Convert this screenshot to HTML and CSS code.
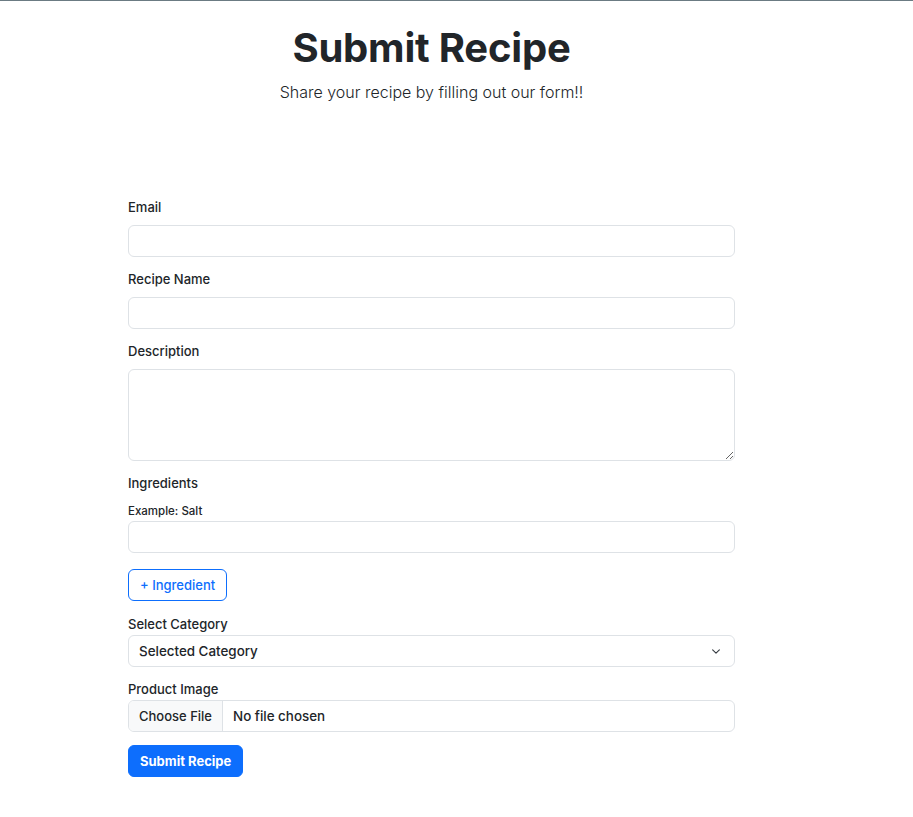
FILE: index.html
```html
<!DOCTYPE html>
<html lang="en">
<head>
<meta charset="utf-8">
<title>Submit Recipe</title>
<link rel="stylesheet" href="styles.css">
</head>
<body>
<main class="page">
  <header class="intro">
    <h1 class="title">Submit Recipe</h1>
    <p class="lead">Share your recipe by filling out our form!!</p>
  </header>
  <form class="recipe-form">
    <div class="field">
      <label class="label" for="email">Email</label>
      <input class="control" id="email" type="email">
    </div>
    <div class="field">
      <label class="label" for="name">Recipe Name</label>
      <input class="control" id="name" type="text">
    </div>
    <div class="field">
      <label class="label" for="desc">Description</label>
      <textarea class="control textarea" id="desc"></textarea>
    </div>
    <div class="field">
      <label class="label" for="ing">Ingredients</label>
      <label class="sublabel" for="ing">Example: Salt</label>
      <input class="control" id="ing" type="text">
    </div>
    <div class="field-btn">
      <button type="button" class="btn btn-outline">+ Ingredient</button>
    </div>
    <div class="field tight">
      <label class="label" for="cat">Select Category</label>
      <select class="control select" id="cat">
        <option>Selected Category</option>
      </select>
    </div>
    <div class="field tight">
      <label class="label" for="img">Product Image</label>
      <input class="control file" id="img" type="file">
    </div>
    <div class="field-submit">
      <button type="submit" class="btn btn-primary">Submit Recipe</button>
    </div>
  </form>
</main>
</body>
</html>
```
FILE: styles.css
```css
* { box-sizing: border-box; }
html, body { margin: 0; padding: 0; }
body {
  border-top: 1px solid #6b7b83;
  font-family: "Inter", "Roboto", "Liberation Sans", sans-serif;
  color: #212529;
  background: #fff;
}
.page {
  width: 607px;
  margin-left: 128px;
  display: flex;
  flex-direction: column;
}
.intro {
  display: flex;
  flex-direction: column;
  align-items: center;
}
.title {
  margin: 23px 0 0;
  font-size: 40px;
  line-height: 48px;
  font-weight: 700;
  letter-spacing: -0.2px;
}
.lead {
  margin: 5px 0 0;
  font-size: 16px;
  line-height: 30px;
  font-weight: 300;
}
.recipe-form {
  margin-top: 90px;
  display: flex;
  flex-direction: column;
}
.field {
  display: flex;
  flex-direction: column;
  margin-bottom: 12px;
}
.label {
  font-size: 13px;
  font-weight: 500;
  line-height: 21px;
  margin-bottom: 7px;
}
.field.tight .label { margin-bottom: 0; }
.sublabel {
  font-size: 11.5px;
  font-weight: 500;
  line-height: 16px;
  margin: 2px 0 2px;
}
.control {
  width: 100%;
  height: 32px;
  border: 1px solid #dee2e6;
  border-radius: 6px;
  background: #fff;
  font-family: inherit;
  font-size: 13.4px;
  font-weight: 500;
  color: #212529;
  padding: 4px 10px;
  outline: none;
}
.textarea {
  height: 92px;
  resize: vertical;
}
.select {
  appearance: none;
  -webkit-appearance: none;
  padding-right: 36px;
  background-image: url("data:image/svg+xml,%3csvg xmlns='http://www.w3.org/2000/svg' viewBox='0 0 16 16'%3e%3cpath fill='none' stroke='%23343a40' stroke-linecap='round' stroke-linejoin='round' stroke-width='2' d='m2 5 6 6 6-6'/%3e%3c/svg%3e");
  background-repeat: no-repeat;
  background-position: right 12px center;
  background-size: 12px 9px;
}
.file {
  padding: 0 10px 0 0;
  line-height: 30px;
  overflow: hidden;
}
.file::file-selector-button {
  height: 30px;
  margin: 0 10px 0 0;
  padding: 0 10px;
  border: 0;
  border-right: 1px solid #dee2e6;
  border-radius: 0;
  background: #f8f9fa;
  color: #212529;
  font-family: inherit;
  font-size: 13px;
  font-weight: 500;
}
.field-btn {
  margin-top: 4px;
  margin-bottom: 13px;
  display: flex;
}
.field-submit {
  margin-top: 1px;
  display: flex;
}
.btn {
  height: 32px;
  border-radius: 6px;
  font-family: inherit;
  font-size: 13px;
  padding: 0 11px;
  cursor: pointer;
}
.btn-outline {
  background: #fff;
  color: #0d6efd;
  border: 1px solid #0d6efd;
  font-weight: 500;
}
.btn-primary {
  background: #0d6efd;
  color: #fff;
  border: 1px solid #0d6efd;
  font-weight: 700;
}
```
